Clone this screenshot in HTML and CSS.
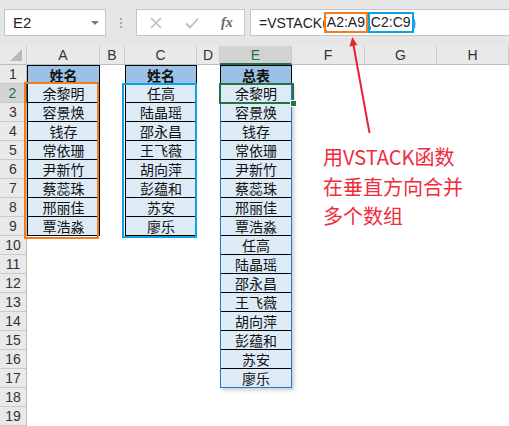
FILE: index.html
```html
<!DOCTYPE html>
<html lang="zh">
<head>
<meta charset="utf-8">
<title>VSTACK</title>
<link rel="stylesheet" href="styles.css">
</head>
<body>
<div class="topbar">
  <div class="namebox"><span class="ref">E2</span><span class="caret"></span></div>
  <div class="grip"><i></i><i></i><i></i></div>
  <div class="fxbox">
    <svg class="ico" width="14" height="14" viewBox="0 0 14 14"><path d="M2 2 L12 12 M12 2 L2 12" stroke="#bdbdbd" stroke-width="1.6" fill="none"/></svg>
    <svg class="ico" width="16" height="14" viewBox="0 0 16 14"><path d="M2 7.5 L6 11.5 L14 2.5" stroke="#bdbdbd" stroke-width="1.8" fill="none"/></svg>
    <span class="fx">fx</span>
  </div>
  <div class="formula"><span class="ftext">=VSTACK(</span><span class="ro">A2:A9</span><span class="comma">,</span><span class="rb">C2:C9</span><span class="paren">)</span></div>
</div>

<div class="sheet">
  <div class="ch corner"><svg width="12" height="12" viewBox="0 0 12 12"><path d="M12 0 L12 12 L0 12 Z" fill="#b9b9b9"/></svg></div>
  <div class="ch">A</div>
  <div class="ch">B</div>
  <div class="ch">C</div>
  <div class="ch">D</div>
  <div class="ch sel">E</div>
  <div class="ch">F</div>
  <div class="ch">G</div>
  <div class="ch">H</div>

  <div class="rh">1</div><div class="c a h">姓名</div><div class="c cc h">姓名</div><div class="c e h">总表</div>
  <div class="rh selr">2</div><div class="c a">余黎明</div><div class="c cc">任高</div><div class="c e">余黎明</div>
  <div class="rh">3</div><div class="c a">容景焕</div><div class="c cc">陆晶瑶</div><div class="c e">容景焕</div>
  <div class="rh">4</div><div class="c a">钱存</div><div class="c cc">邵永昌</div><div class="c e">钱存</div>
  <div class="rh">5</div><div class="c a">常依珊</div><div class="c cc">王飞薇</div><div class="c e">常依珊</div>
  <div class="rh">6</div><div class="c a">尹新竹</div><div class="c cc">胡向萍</div><div class="c e">尹新竹</div>
  <div class="rh">7</div><div class="c a">蔡蕊珠</div><div class="c cc">彭蕴和</div><div class="c e">蔡蕊珠</div>
  <div class="rh">8</div><div class="c a">邢丽佳</div><div class="c cc">苏安</div><div class="c e">邢丽佳</div>
  <div class="rh">9</div><div class="c a">覃浩淼</div><div class="c cc">廖乐</div><div class="c e">覃浩淼</div>
  <div class="rh">10</div><div class="c e">任高</div>
  <div class="rh">11</div><div class="c e">陆晶瑶</div>
  <div class="rh">12</div><div class="c e">邵永昌</div>
  <div class="rh">13</div><div class="c e">王飞薇</div>
  <div class="rh">14</div><div class="c e">胡向萍</div>
  <div class="rh">15</div><div class="c e">彭蕴和</div>
  <div class="rh">16</div><div class="c e">苏安</div>
  <div class="rh">17</div><div class="c e">廖乐</div>
  <div class="rh">18</div>
  <div class="rh">19</div>

  <div class="hl hl-a"></div>
  <div class="hl hl-c"></div>
  <div class="spill"></div>
  <div class="active"><span class="handle"></span></div>
</div>

<svg class="arrow" width="509" height="426" viewBox="0 0 509 426">
  <line x1="369.5" y1="133" x2="353.3" y2="44" stroke="#e8242f" stroke-width="2"/>
  <polygon points="352.4,37 357.2,45 349.4,46.4" fill="#e8242f"/>
</svg>

<div class="note">用VSTACK函数<br>在垂直方向合并<br>多个数组</div>
</body>
</html>
```

FILE: styles.css
```css
body {
  margin: 0;
  width: 509px;
  height: 426px;
  overflow: hidden;
  position: relative;
  background: #fff;
  font-family: "Liberation Sans", Arial, sans-serif;
}

/* ---------- formula bar ---------- */
.topbar {
  display: flex;
  align-items: flex-start;
  height: 46px;
  box-sizing: border-box;
  padding-top: 9px;
  background: #e6e6e6;
}
.namebox {
  margin-left: 4px;
  width: 102px;
  height: 27px;
  box-sizing: border-box;
  background: #fff;
  border: 1px solid #c6c6c6;
  display: flex;
  align-items: center;
  justify-content: space-between;
  padding: 0 6px 0 8px;
  font-size: 15px;
  color: #222;
}
.caret {
  width: 0;
  height: 0;
  border-left: 4px solid transparent;
  border-right: 4px solid transparent;
  border-top: 4px solid #7a7a7a;
}
.grip {
  width: 30px;
  height: 27px;
  display: flex;
  flex-direction: column;
  align-items: center;
  justify-content: center;
  gap: 2px;
}
.grip i {
  display: block;
  width: 2px;
  height: 2px;
  background: #a8a8a8;
}
.fxbox {
  width: 109px;
  height: 27px;
  box-sizing: border-box;
  background: #fff;
  border: 1px solid #c6c6c6;
  display: flex;
  align-items: center;
  padding-left: 12px;
  gap: 21px;
}
.fx {
  font-family: "Liberation Serif", serif;
  font-style: italic;
  font-weight: bold;
  font-size: 14px;
  color: #666;
}
.formula {
  margin-left: 5px;
  flex: 1;
  height: 27px;
  box-sizing: border-box;
  background: #fff;
  border: 1px solid #c6c6c6;
  border-right: none;
  display: flex;
  align-items: center;
  padding-left: 8px;
  font-size: 14px;
  color: #222;
  white-space: nowrap;
}
.ro, .rb {
  display: inline-block;
  line-height: 17px;
  padding: 0 1px;
  position: relative;
}
.ro { border: 2px solid #f47d22; margin-left: -3px; }
.rb { border: 2px solid #10a0e6; margin-left: -3px; }
.comma { margin-right: -1px; }
.paren { color: #2b86d6; margin-left: -2px; }

/* ---------- sheet ---------- */
.sheet {
  position: relative;
  display: grid;
  grid-template-columns: 27px 73px 25px 72px 23px 72px 73px 72px 72px;
  grid-template-rows: 19px repeat(19, 19px);
  background: #fff;
}
.ch, .rh {
  box-sizing: border-box;
  background: #e9e9e9;
  display: flex;
  align-items: center;
  justify-content: center;
  font-size: 14px;
  color: #333;
}
.ch {
  border-right: 1px solid #cacaca;
  border-bottom: 1px solid #bdbdbd;
}
.corner {
  justify-content: flex-end;
  align-items: flex-end;
  padding: 0 4px 3px 0;
}
.corner svg { display: block; }
.ch.sel {
  background: #d3d3d3;
  color: #217346;
  border-bottom: 2px solid #217346;
}
.rh {
  grid-column: 1;
  border-right: 1px solid #bdbdbd;
  border-bottom: 1px solid #cacaca;
}
.rh.selr {
  background: #d3d3d3;
  color: #217346;
  border-right: 2px solid #217346;
}

.c {
  box-sizing: border-box;
  background: #ddebf7;
  border-left: 1px solid #000;
  border-right: 1px solid #000;
  border-bottom: 1px solid #000;
  display: flex;
  align-items: center;
  justify-content: center;
  font-family: "Noto Sans CJK SC", "Liberation Sans", sans-serif;
  font-size: 14px;
  color: #111;
}
.c.a { grid-column: 2; }
.c.cc { grid-column: 4; }
.c.e { grid-column: 6; }
.c.h {
  background: #9bc2e6;
  font-weight: bold;
  border-top: 1px solid #000;
}

/* overlays placed over grid areas */
.hl {
  position: absolute;
  box-sizing: border-box;
  pointer-events: none;
}
.hl-a {
  grid-column: 2 / 3;
  grid-row: 3 / 11;
  top: -2px;
  bottom: -3px;
  left: -3px;
  right: 1px;
  border: 2px solid #f47d22;
}
.hl-c {
  grid-column: 4 / 5;
  grid-row: 3 / 11;
  top: -1px;
  bottom: -2px;
  left: -3px;
  right: 0;
  border: 2px solid #10a0e6;
}
.spill {
  position: absolute;
  grid-column: 6 / 7;
  grid-row: 3 / 19;
  top: -1px;
  bottom: 0;
  left: 0;
  right: 0;
  border: 1px solid #2f6fd8;
  box-shadow: 2px 2px 4px rgba(0, 0, 0, 0.22);
  pointer-events: none;
}
.active {
  position: absolute;
  grid-column: 6 / 7;
  grid-row: 3 / 4;
  top: -1px;
  bottom: -1px;
  left: -1px;
  right: -2px;
  box-sizing: border-box;
  border: 2px solid #217346;
}
.handle {
  position: absolute;
  right: -5px;
  bottom: -5px;
  width: 7px;
  height: 7px;
  box-sizing: border-box;
  background: #217346;
  border: 1px solid #fff;
}

/* ---------- annotation ---------- */
.arrow {
  position: absolute;
  left: 0;
  top: 0;
  pointer-events: none;
}
.note {
  position: absolute;
  left: 323px;
  top: 142px;
  font-family: "Noto Sans CJK SC", sans-serif;
  font-size: 20px;
  line-height: 29.5px;
  color: #f02b3c;
  white-space: nowrap;
}
```
